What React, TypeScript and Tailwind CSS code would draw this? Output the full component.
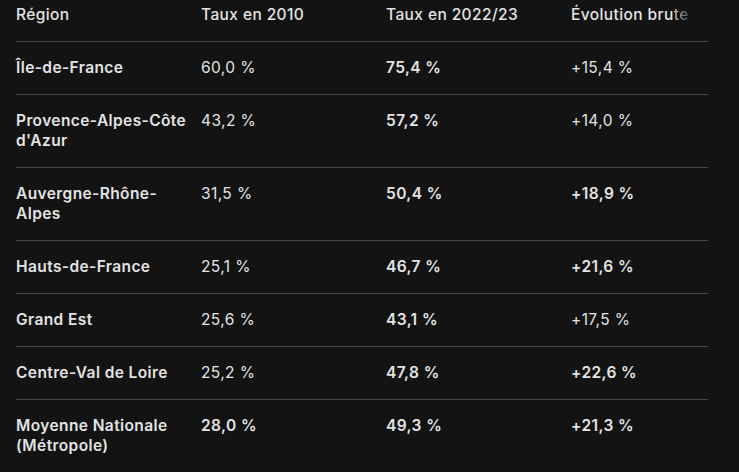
import React from "react";

type Cell = { text: string; bold?: boolean };
type Row = [Cell, Cell, Cell, Cell];

const ROWS: Row[] = [
  [{ text: "Île-de-France", bold: true }, { text: "60,0 %" }, { text: "75,4 %", bold: true }, { text: "+15,4 %" }],
  [{ text: "Provence-Alpes-Côte d'Azur", bold: true }, { text: "43,2 %" }, { text: "57,2 %", bold: true }, { text: "+14,0 %" }],
  [{ text: "Auvergne-Rhône-Alpes", bold: true }, { text: "31,5 %" }, { text: "50,4 %", bold: true }, { text: "+18,9 %", bold: true }],
  [{ text: "Hauts-de-France", bold: true }, { text: "25,1 %" }, { text: "46,7 %", bold: true }, { text: "+21,6 %", bold: true }],
  [{ text: "Grand Est", bold: true }, { text: "25,6 %" }, { text: "43,1 %", bold: true }, { text: "+17,5 %" }],
  [{ text: "Centre-Val de Loire", bold: true }, { text: "25,2 %" }, { text: "47,8 %", bold: true }, { text: "+22,6 %", bold: true }],
  [{ text: "Moyenne Nationale (Métropole)", bold: true }, { text: "28,0 %", bold: true }, { text: "49,3 %", bold: true }, { text: "+21,3 %", bold: true }],
];

const GRID = "grid grid-cols-[185px_185px_185px_1fr]";

export default function App() {
  return (
    <div
      className="h-[472px] w-[739px] overflow-hidden bg-[#131314] text-[15.5px] leading-5 tracking-[0.4px] text-[#e3e3e3]"
      style={{ fontFamily: "Inter, 'Noto Sans', sans-serif" }}
    >
      <div className="ml-4 w-[692px]">
        {/* header */}
        <div className={`${GRID} border-b border-[#444746] pb-4 pt-[5px] font-medium`}>
          <div>Région</div>
          <div>Taux en 2010</div>
          <div>Taux en 2022/23</div>
          <div>
            Évolution bru
            <span className="bg-gradient-to-r from-[#e3e3e3]/80 to-[#e3e3e3]/30 bg-clip-text text-transparent">
              te
            </span>
          </div>
        </div>

        {ROWS.map((row, i) => (
          <div
            key={i}
            className={`${GRID} py-4 ${i < ROWS.length - 1 ? "border-b border-[#444746]" : ""}`}
          >
            {row.map((c, j) => (
              <div key={j} className={`pr-2 ${c.bold ? "font-semibold" : "font-normal"}`}>
                {c.text}
              </div>
            ))}
          </div>
        ))}
      </div>
    </div>
  );
}
